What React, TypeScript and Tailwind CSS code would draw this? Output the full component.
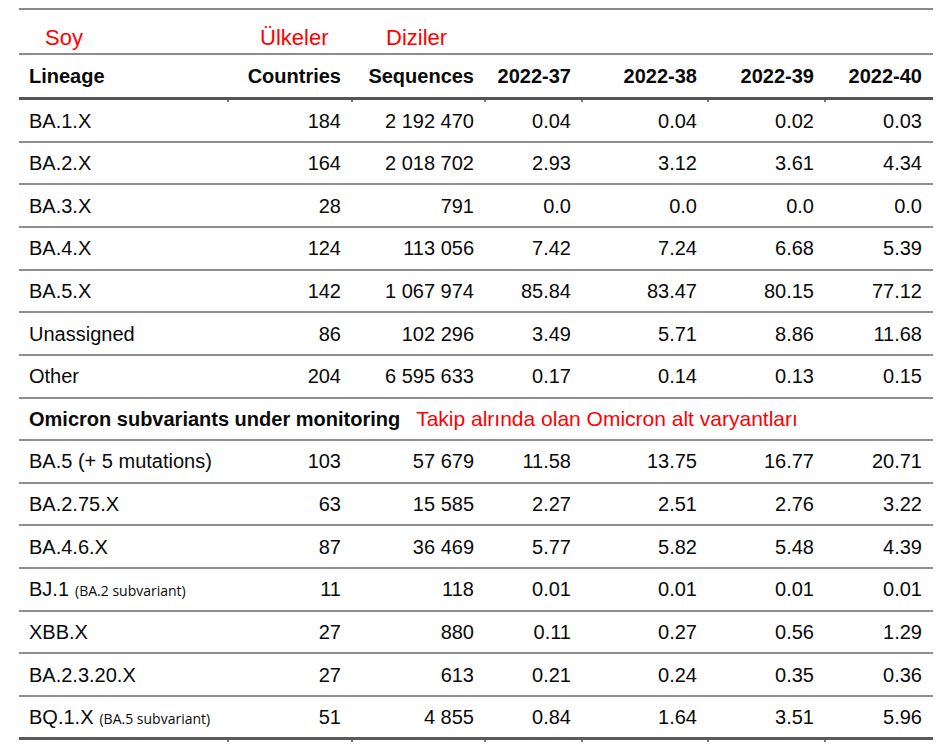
import React from "react";

type Row = { name: string; sub?: string; vals: string[] };

const rows1: Row[] = [
  { name: "BA.1.X", vals: ["184", "2 192 470", "0.04", "0.04", "0.02", "0.03"] },
  { name: "BA.2.X", vals: ["164", "2 018 702", "2.93", "3.12", "3.61", "4.34"] },
  { name: "BA.3.X", vals: ["28", "791", "0.0", "0.0", "0.0", "0.0"] },
  { name: "BA.4.X", vals: ["124", "113 056", "7.42", "7.24", "6.68", "5.39"] },
  { name: "BA.5.X", vals: ["142", "1 067 974", "85.84", "83.47", "80.15", "77.12"] },
  { name: "Unassigned", vals: ["86", "102 296", "3.49", "5.71", "8.86", "11.68"] },
  { name: "Other", vals: ["204", "6 595 633", "0.17", "0.14", "0.13", "0.15"] },
];

const rows2: Row[] = [
  { name: "BA.5 (+ 5 mutations)", vals: ["103", "57 679", "11.58", "13.75", "16.77", "20.71"] },
  { name: "BA.2.75.X", vals: ["63", "15 585", "2.27", "2.51", "2.76", "3.22"] },
  { name: "BA.4.6.X", vals: ["87", "36 469", "5.77", "5.82", "5.48", "4.39"] },
  { name: "BJ.1", sub: "(BA.2 subvariant)", vals: ["11", "118", "0.01", "0.01", "0.01", "0.01"] },
  { name: "XBB.X", vals: ["27", "880", "0.11", "0.27", "0.56", "1.29"] },
  { name: "BA.2.3.20.X", vals: ["27", "613", "0.21", "0.24", "0.35", "0.36"] },
  { name: "BQ.1.X", sub: "(BA.5 subvariant)", vals: ["51", "4 855", "0.84", "1.64", "3.51", "5.96"] },
];

const GRID = "grid grid-cols-[209px_124px_133px_97px_126px_117px_108px]";

function DataRow({ r, first, last }: { r: Row; first?: boolean; last?: boolean }) {
  return (
    <div
      className={`${GRID} items-center ${first ? "h-[40.7px]" : "h-[42.65px]"} ${
        last ? "border-b-[3px] border-[#5a5a5a]" : "border-b-2 border-[#8f8f8f]"
      }`}
    >
      <div className="pl-[10px] whitespace-nowrap flex items-baseline">
        <span>{r.name}</span>
        {r.sub && (
          <span className="ml-[6px] text-[14px] font-['Open_Sans',sans-serif]">{r.sub}</span>
        )}
      </div>
      {r.vals.map((v, i) => (
        <div key={i} className="pr-[11px] text-right whitespace-nowrap">
          {v.replace(/ /g, "\u00a0")}
        </div>
      ))}
    </div>
  );
}

function Ticks() {
  return (
    <div className={`${GRID} h-[2px]`}>
      {[0, 1, 2, 3, 4, 5, 6].map((i) => (
        <div key={i} className="flex justify-end">
          {i < 6 && <div className="w-[2px] h-[2px] bg-[#7a7a7a] translate-x-[1px]" />}
        </div>
      ))}
    </div>
  );
}

export default function App() {
  return (
    <div className="w-[945px] h-[747px] bg-white overflow-hidden font-['Liberation_Sans',Arial,sans-serif] text-[20px] text-[#0a0a0a] leading-none">
      <div className="ml-[19px] w-[914px] pt-[8px]">
        <div className="h-[2px] bg-[#8a8a8a]" />
        <div className={`${GRID} h-[43px] items-center text-[22px] text-[#ff0000] pt-[12px]`}>
          <div className="pl-[26px]">Soy</div>
          <div className="pl-[32px]">Ülkeler</div>
          <div className="pl-[34px]">Diziler</div>
        </div>
        <div className="h-[2px] bg-[#8a8a8a]" />
        <div className={`${GRID} h-[42px] items-center font-bold`}>
          <div className="pl-[10px]">Lineage</div>
          {["Countries", "Sequences", "2022-37", "2022-38", "2022-39", "2022-40"].map((h) => (
            <div key={h} className="pr-[11px] text-right whitespace-nowrap">
              {h}
            </div>
          ))}
        </div>
        <div className="h-[3px] bg-[#555]" />
        <Ticks />
        {rows1.map((r, i) => (
          <DataRow key={r.name} r={r} first={i === 0} />
        ))}
        <div className="h-[42.65px] border-b-2 border-[#8f8f8f] flex items-center pl-[10px] whitespace-nowrap">
          <span className="font-bold">Omicron subvariants under monitoring</span>
          <span className="ml-[16px] text-[21px] text-[#ff0000]">Takip alrında olan Omicron alt varyantları</span>
        </div>
        {rows2.map((r, i) => (
          <DataRow key={r.name} r={r} last={i === rows2.length - 1} />
        ))}
        <Ticks />
      </div>
    </div>
  );
}
